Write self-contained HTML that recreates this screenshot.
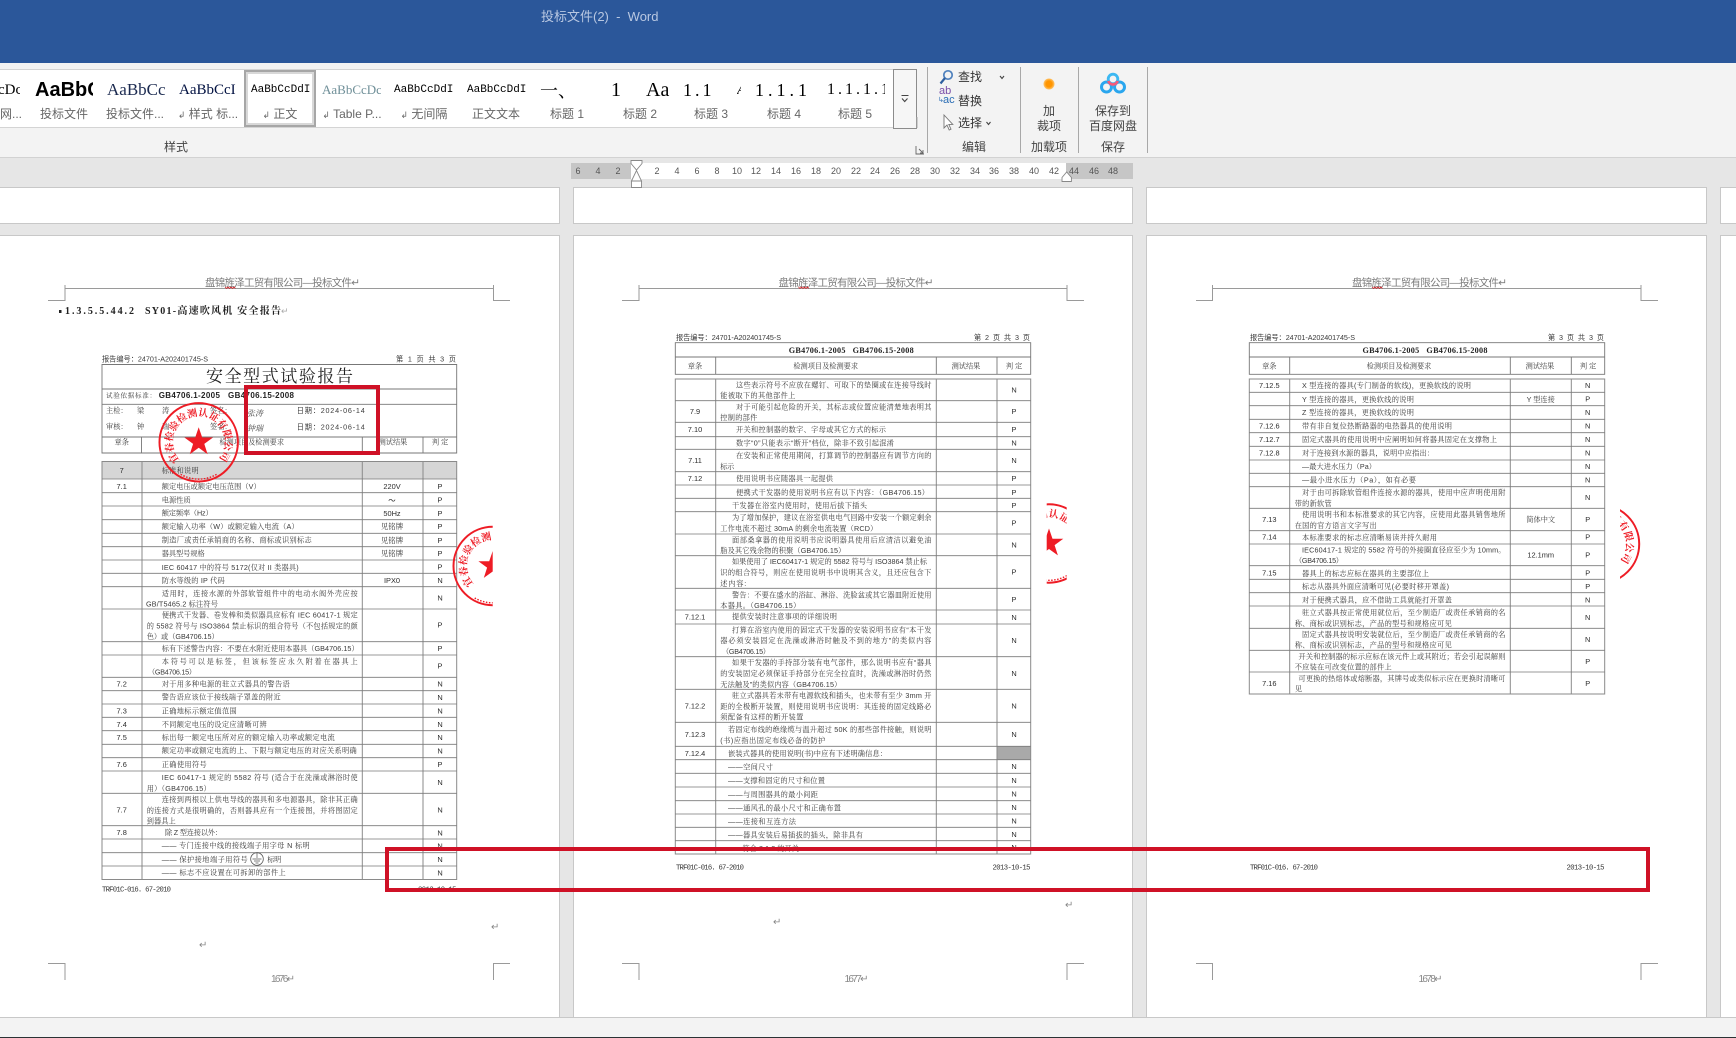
<!DOCTYPE html>
<html><head><meta charset="utf-8"><title>投标文件(2) - Word</title>
<style>
html,body{margin:0;padding:0;width:1736px;height:1038px;overflow:hidden;background:#e6e6e6}
body{position:relative;font-family:"Liberation Sans","Noto Sans CJK SC",sans-serif}
.a{position:absolute;white-space:nowrap}
.g{position:absolute;overflow:hidden;white-space:nowrap;top:78px;height:24px;line-height:24px;color:#000}
.l{position:absolute;top:105px;height:18px;line-height:18px;font-size:12px;color:#666;white-space:nowrap;transform:translateX(-50%)}
.c{position:absolute;font-size:12px;line-height:16px;color:#444;white-space:nowrap;transform:translate(-50%,-50%)}
.r{position:absolute;top:165px;font-size:9px;line-height:13px;color:#555;transform:translateX(-50%);transform-origin:center}
.p{position:absolute;background:#fff;box-shadow:0 0 0 1px #c8c8c8}
svg{position:absolute;left:0;top:0}
#doc{filter:blur(.3px)}
.t{font:7.2px "Liberation Sans","Noto Serif CJK SC",serif;fill:#3a3a3a}
.m{text-anchor:middle}
.n{font:7.4px "Liberation Sans",sans-serif;fill:#2c2c2c;text-anchor:middle}
.h{font:7.2px "Liberation Sans","Noto Sans CJK SC",sans-serif;fill:#3a3a3a}
.hd{font:10.5px "Liberation Sans","Noto Sans CJK SC",sans-serif;fill:#7c7c7c}
.s{font:bold 10px "Noto Serif CJK SC",serif;fill:#ee1c25}
</style></head><body>
<div class="a" style="left:0;top:0;width:1736px;height:63px;background:#2b579a"></div>
<div class="a" style="left:541px;top:8px;font-size:13px;line-height:18px;color:#b9c8e2">投标文件(2)&nbsp; - &nbsp;Word</div>
<div class="a" style="left:0;top:63px;width:1736px;height:94px;background:#f3f3f3;border-bottom:1px solid #d2d2d2"></div>

<div class="a" style="left:0;top:69px;width:893px;height:59px;background:#fff;border-top:1px solid #d4d4d4;border-bottom:1px solid #d4d4d4;box-sizing:border-box"></div>
<div class="a" style="left:244px;top:70px;width:72px;height:57px;background:#fff;border:2px solid #a6a6a6;box-shadow:inset 0 0 0 2px #d8d8d8;box-sizing:border-box"></div>
<div class="a" style="left:893px;top:69px;width:24px;height:60px;border:1px solid #8c8c8c;box-sizing:border-box;background:#f6f6f6"></div>
<svg width="1736" height="160" style="pointer-events:none">
<path d="M901.500 95.500h7M902 98.500l2.700 3 2.800-3" fill="none" stroke="#444" stroke-width="1.100"/>
<path d="M917 128v-11M927.500 67v86M1020.500 67v86M1078.500 67v86M1147.500 67v86" stroke="#a8a8a8" stroke-width="1"/>
<path d="M916 146v8h8M919 149l4 4m0-3v3h-3" fill="none" stroke="#666" stroke-width=".9"/>
<circle cx="948" cy="75" r="4.200" fill="none" stroke="#4f81bd" stroke-width="1.700"/><path d="M945 78l-4.500 5.500" stroke="#2f5f9f" stroke-width="2.200"/>
<path d="M1000 76l2 2.500 2-2.500M986.500 122l2 2.500 2-2.500" fill="none" stroke="#444" stroke-width="1.100"/>
<path d="M944 115v13l3-3 2.200 5 1.800-.8-2.200-4.800h4z" fill="#fff" stroke="#777" stroke-width=".9"/>
<defs><radialGradient id="o"><stop offset="55%" stop-color="#ff9500"/><stop offset="100%" stop-color="#ffc46a"/></radialGradient></defs>
<circle cx="1049" cy="84" r="5.500" fill="url(#o)"/>
<circle cx="1106.500" cy="87" r="5" fill="none" stroke="#2aa6ee" stroke-width="3"/>
<circle cx="1119.500" cy="87" r="5" fill="none" stroke="#2aa6ee" stroke-width="3"/>
<circle cx="1113" cy="79" r="4.800" fill="none" stroke="#3cb8f2" stroke-width="2.800"/>
<path d="M1108.400 81a4.800 4.800 0 0 0 9.200 0" fill="none" stroke="#f4597a" stroke-width="2.800"/>
</svg>
<div class="a" style="left:939px;top:87px;font:11px/9px 'Liberation Sans',sans-serif;color:#7a4ea8">ab</div>
<div class="a" style="left:943px;top:96px;font:11px/9px 'Liberation Sans',sans-serif;color:#2a6db5">ac</div>
<div class="a" style="left:938px;top:97px;font:7px/8px 'Liberation Sans',sans-serif;color:#2a6db5">↳</div>
<div class="a" style="left:958px;top:69px;font-size:12px;line-height:16px;color:#333">查找</div>
<div class="a" style="left:958px;top:93px;font-size:12px;line-height:16px;color:#333">替换</div>
<div class="a" style="left:958px;top:115px;font-size:12px;line-height:16px;color:#333">选择</div>
<div class="c" style="left:974px;top:147px">编辑</div>
<div class="c" style="left:1049px;top:111px">加</div>
<div class="c" style="left:1049px;top:126px">裁项</div>
<div class="c" style="left:1049px;top:147px">加载项</div>
<div class="c" style="left:1113px;top:111px">保存到</div>
<div class="c" style="left:1113px;top:126px">百度网盘</div>
<div class="c" style="left:1113px;top:147px">保存</div>
<div class="c" style="left:176px;top:147px">样式</div>

<div class="g" style="left:0;width:20px;font:15px/24px 'Liberation Serif',serif"><span style="margin-left:-2px">cDc</span></div>
<div class="g" style="left:35px;width:58px;font:bold 20px/24px 'Liberation Sans',sans-serif">AaBbC</div>
<div class="g" style="left:107px;width:59px;font:17px/24px 'Liberation Serif',serif;color:#1b2a50">AaBbCc</div>
<div class="g" style="left:179px;width:59px;font:15px/24px 'Liberation Serif',serif;color:#001040">AaBbCcI</div>
<div class="g" style="left:251px;width:59px;font:11px/24px 'Liberation Mono',monospace">AaBbCcDdI</div>
<div class="g" style="left:322px;width:59px;font:13px/24px 'Liberation Serif',serif;color:#6f8f98">AaBbCcDc</div>
<div class="g" style="left:394px;width:59px;font:11px/24px 'Liberation Mono',monospace">AaBbCcDdI</div>
<div class="g" style="left:467px;width:59px;font:11px/24px 'Liberation Mono',monospace">AaBbCcDdI</div>
<div class="g" style="left:540px;width:40px;font:18px/24px 'Noto Serif CJK SC',serif">一、</div>
<div class="g" style="left:611px;width:12px;font:20px/24px 'Liberation Serif',serif">1</div>
<div class="g" style="left:646px;width:26px;font:20px/24px 'Liberation Serif',serif">Aa</div>
<div class="g" style="left:683px;width:34px;font:18px/24px 'Liberation Serif',serif;letter-spacing:3px">1.1</div>
<div class="g" style="left:737px;width:4px;font:italic 15px/24px 'Liberation Serif',serif">A</div>
<div class="g" style="left:755px;width:56px;font:18px/24px 'Liberation Serif',serif;letter-spacing:4px">1.1.1</div>
<div class="g" style="left:827px;width:58px;font:16px/24px 'Liberation Serif',serif;letter-spacing:3px">1.1.1.1</div>
<div class="l" style="left:11px">网...</div>
<div class="l" style="left:64px">投标文件</div>
<div class="l" style="left:135px">投标文件...</div>
<div class="l" style="left:208px"><span style="font-size:9px">↲</span> 样式 标...</div>
<div class="l" style="left:280px"><span style="font-size:9px">↲</span> 正文</div>
<div class="l" style="left:352px"><span style="font-size:9px">↲</span> Table P...</div>
<div class="l" style="left:424px"><span style="font-size:9px">↲</span> 无间隔</div>
<div class="l" style="left:496px">正文文本</div>
<div class="l" style="left:567px">标题 1</div>
<div class="l" style="left:640px">标题 2</div>
<div class="l" style="left:711px">标题 3</div>
<div class="l" style="left:784px">标题 4</div>
<div class="l" style="left:855px">标题 5</div>

<!-- ruler -->
<div class="a" style="left:571px;top:163px;width:562px;height:16px;background:#c6c6c6"></div>
<div class="a" style="left:631px;top:163px;width:435px;height:16px;background:#fff"></div>
<div class="r" style="left:578px">6</div><div class="r" style="left:598px">4</div><div class="r" style="left:618px">2</div>
<div class="r" style="left:657px">2</div><div class="r" style="left:677px">4</div><div class="r" style="left:697px">6</div><div class="r" style="left:717px">8</div><div class="r" style="left:737px">10</div><div class="r" style="left:756px">12</div><div class="r" style="left:776px">14</div><div class="r" style="left:796px">16</div><div class="r" style="left:816px">18</div><div class="r" style="left:836px">20</div><div class="r" style="left:856px">22</div><div class="r" style="left:875px">24</div><div class="r" style="left:895px">26</div><div class="r" style="left:915px">28</div><div class="r" style="left:935px">30</div><div class="r" style="left:955px">32</div><div class="r" style="left:975px">34</div><div class="r" style="left:994px">36</div><div class="r" style="left:1014px">38</div><div class="r" style="left:1034px">40</div><div class="r" style="left:1054px">42</div><div class="r" style="left:1074px">44</div><div class="r" style="left:1094px">46</div><div class="r" style="left:1113px">48</div>

<!-- pages -->
<div class="p" style="left:-2px;top:188px;width:561px;height:35px"></div>
<div class="p" style="left:574px;top:188px;width:558px;height:35px"></div>
<div class="p" style="left:1147px;top:188px;width:559px;height:35px"></div>
<div class="p" style="left:1721px;top:188px;width:20px;height:35px"></div>
<div class="p" style="left:-2px;top:236px;width:561px;height:790px"></div>
<div class="p" style="left:574px;top:236px;width:558px;height:790px"></div>
<div class="p" style="left:1147px;top:236px;width:559px;height:790px"></div>
<div class="p" style="left:1721px;top:236px;width:20px;height:790px"></div>
<div class="a" style="left:0;top:1017px;width:1736px;height:20px;background:#f3f3f3;border-top:1px solid #c8c8c8;box-sizing:border-box"></div>
<div class="a" style="left:0;top:1037px;width:1736px;height:1px;background:#2a3234"></div>

<svg width="1736" height="1038">
<!-- ruler markers -->
<path d="M631 160.500h11v3l-5.500 6.500-5.500-6.500zM631.500 181l5-10.500 5 10.500zM631.500 181h10v6.500h-10z" fill="#fff" stroke="#888" stroke-width=".9"/>
<path d="M1062 181.500v-4l4.700-5.500 4.700 5.500v4z" fill="#fff" stroke="#888" stroke-width=".9"/>
<!-- crop marks -->
<g fill="none" stroke="#9a9a9a" stroke-width="1">
<path d="M48 300.500h17V285M493.500 285v15.500H510M65 288.500h428M48 963.500h17V980M493.500 980V963.500H510"/>
<path d="M622 300.500h17V285M1067 285v15.500H1084M639 288.500h428M622 963.500h17V980M1067 980V963.500H1084"/>
<path d="M1196 300.500h16.500V285M1641 285v15.500H1658M1212 288.500h429M1196 963.500h16.500V980M1641 980V963.500H1658"/>
</g>
<defs>
<path id="arc" d="M-19 18A26.200 26.200 0 1 1 19 18"/>
<clipPath id="c2"><rect x="400" y="500" width="92.700" height="120"/></clipPath>
<clipPath id="c3"><rect x="1046.700" y="495" width="20" height="100"/></clipPath>
<clipPath id="c4"><rect x="1620" y="495" width="30" height="100"/></clipPath>
<g id="stamp">
<circle r="39.200" fill="none" stroke="#ee1c25" stroke-width="2"/>
<path d="M0-15L3.500-4.800H14.300L5.600 1.600 8.900 11.900 0 5.500-8.900 11.900-5.600 1.600-14.300-4.800H-3.500z" fill="#ee1c25"/>
<text class="s"><textPath href="#arc">宜春检验检测认证有限公司</textPath></text>
<path d="M-18 32A36 36 0 0 0 18 32" fill="none" stroke="#ee1c25" stroke-width="1.400" stroke-dasharray="1.500 1.500"/>
</g>
</defs>
<g class="hd">
<text x="205" y="286" textLength="155">盘锦旌泽工贸有限公司—投标文件↵</text>
<text x="778.500" y="286" textLength="155">盘锦旌泽工贸有限公司—投标文件↵</text>
<text x="1352" y="286" textLength="155">盘锦旌泽工贸有限公司—投标文件↵</text>
</g>
<path d="M225 287l1.500 1.500 1.500-1.500 1.500 1.500 1.500-1.500 1.500 1.500 1.500-1.500 1.500 1.500M798.500 287l1.500 1.500 1.500-1.500 1.500 1.500 1.500-1.500 1.500 1.500 1.500-1.500 1.500 1.500M1372 287l1.500 1.500 1.500-1.500 1.500 1.500 1.500-1.500 1.500 1.500 1.500-1.500 1.500 1.500" fill="none" stroke="#d3272c" stroke-width=".8"/>
<rect x="59" y="310" width="2.500" height="3" fill="#222"/>
<text x="65" y="314" textLength="69" style="font:bold 10px 'Liberation Serif',serif;fill:#222">1.3.5.5.44.2</text>
<text x="145" y="314" textLength="136" style="font:bold 10px 'Liberation Serif','Noto Serif CJK SC',serif;fill:#222">SY01-高速吹风机 安全报告</text>
<text x="281" y="314" style="font:9px 'Liberation Sans',sans-serif;fill:#aaa">↵</text>
<g style="font:10px 'Liberation Sans',sans-serif;fill:#888">
<text x="491" y="930">↵</text><text x="199" y="948">↵</text><text x="1065" y="908">↵</text><text x="773" y="925">↵</text>
<text x="271" y="982" textLength="24">1676↵</text><text x="844.500" y="982" textLength="24">1677↵</text><text x="1418.500" y="982" textLength="24">1678↵</text>
</g>

<g id="doc">
<!-- PAGE 1 -->
<rect x="102" y="461" width="354.700" height="18" fill="#d6d6d6"/>
<path d="M102 364.500H456.700V453H102ZM102 389H456.700M102 404.300H456.700M102 437H456.700M141.500 437V453M362.300 437V453M423 437V453" fill="none" stroke="#777" stroke-width=".9"/>
<path d="M102 461.500H456.700V879.500H102ZM142 461.500V879.500M362.300 461.500V879.500M423 461.500V879.500" fill="none" stroke="#8a8a8a" stroke-width="1"/>
<path d="M102 479H456.700M102 492.700H456.700M102 506H456.700M102 519.700H456.700M102 533.300H456.700M102 546.700H456.700M102 560H456.700M102 573.300H456.700M102 586.700H456.700M102 609H456.700M102 641.700H456.700M102 655H456.700M102 677.300H456.700M102 690.700H456.700M102 704H456.700M102 717.300H456.700M102 730.700H456.700M102 744.300H456.700M102 757.700H456.700M102 771H456.700M102 793.300H456.700M102 825.700H456.700M102 839H456.700M102 852.700H456.700M102 866H456.700" fill="none" stroke="#7a7a7a" stroke-width=".8"/>
<text class="h" x="102" y="361.500" textLength="106">报告编号：24701-A202401745-S</text>
<text class="h" x="396" y="361.500" textLength="60">第 1 页 共 3 页</text>
<text x="206" y="382" textLength="147" style="font:17px 'Noto Serif CJK SC',serif;fill:#222">安全型式试验报告</text>
<text class="t" x="106" y="397.500" textLength="50" style="font-size:6.500px">试验依据标准：</text>
<text x="158.700" y="398" textLength="135.300" style="font:bold 8px 'Liberation Sans',sans-serif;fill:#222">GB4706.1-2005&#160;&#160;&#160;GB4706.15-2008</text>
<text class="t" x="106" y="413">主检：</text><text class="t" x="137" y="413">梁</text><text class="t" x="162" y="413">涛</text><text class="t" x="210" y="413">签名：</text>
<text x="247" y="416" style="font:italic 8px 'Noto Serif CJK SC',serif;fill:#444">张涛</text>
<text class="h" x="296.700" y="413" textLength="68">日期：2024-06-14</text>
<text class="t" x="106" y="429">审核：</text><text class="t" x="137" y="429">钟</text><text class="t" x="162" y="429">瑞</text><text class="t" x="210" y="429">签名：</text>
<text x="247" y="431" style="font:italic 8px 'Noto Serif CJK SC',serif;fill:#444">钟瑞</text>
<text class="h" x="296.700" y="429.500" textLength="68">日期：2024-06-14</text>
<text class="t m" x="121.700" y="444.500">章条</text><text class="t m" x="251.700" y="444.500">检测项目及检测要求</text><text class="t m" x="393" y="444.500">测试结果</text><text class="t m" x="440" y="444.500">判 定</text>
<g class="t">
<text x="161.700" y="473" textLength="37">标准和说明</text>
<text x="161.700" y="489.200" textLength="99">额定电压或额定电压范围（V）</text>
<text x="161.700" y="502.500" textLength="29">电源性质</text>
<text x="161.700" y="515.500" textLength="51">额定频率（Hz）</text>
<text x="161.700" y="529.200" textLength="137">额定输入功率（W）或额定输入电流（A）</text>
<text x="161.700" y="542.500" textLength="150">制造厂或责任承销商的名称、商标或识别标志</text>
<text x="161.700" y="556.200" textLength="43">器具型号规格</text>
<text x="161.700" y="570" textLength="137">IEC 60417 中的符号 5172(仅对 II 类器具)</text>
<text x="161.700" y="583.200" textLength="63">防水等级的 IP 代码</text>
<text x="161.700" y="595.800" textLength="196">适用时，连接水源的外部软管组件中的电动水阀外壳应按</text>
<text x="146" y="606.500" textLength="72">GB/T5465.2 标注符号</text>
<text x="161.700" y="617.500" textLength="196">便携式干发器、卷发棒和类似器具应标有 IEC 60417-1 规定</text>
<text x="146.700" y="628.500" textLength="211">的 5582 符号与 ISO3864 禁止标识的组合符号（不包括规定的颜</text>
<text x="146.700" y="639.200" textLength="72">色）或（GB4706.15）</text>
<text x="161.700" y="651.200" textLength="197">标有下述警告内容：不要在水附近使用本器具（GB4706.15）</text>
<text x="161.700" y="663.800" textLength="196">本符号可以是标签，但该标签应永久附着在器具上</text>
<text x="148" y="674.500" textLength="48">（GB4706.15）</text>
<text x="161.700" y="686.500" textLength="128">对于用多种电源的驻立式器具的警告语</text>
<text x="161.700" y="699.500" textLength="119">警告语应该位于接线端子罩盖的附近</text>
<text x="161.700" y="713.500" textLength="75">正确地标示额定值范围</text>
<text x="161.700" y="726.800" textLength="105">不同额定电压的设定应清晰可辨</text>
<text x="161.700" y="739.800" textLength="173">标出每一额定电压所对应的额定输入功率或额定电流</text>
<text x="161.700" y="753.200" textLength="195">额定功率或额定电流的上、下限与额定电压的对应关系明确</text>
<text x="161.700" y="767.200" textLength="45">正确使用符号</text>
<text x="161.700" y="780.200" textLength="196">IEC 60417-1 规定的 5582 符号 (适合于在洗澡或淋浴时使</text>
<text x="146.700" y="790.800" textLength="64">用）（GB4706.15）</text>
<text x="161.700" y="801.800" textLength="196">连接到两根以上供电导线的器具和多电源器具，除非其正确</text>
<text x="146.700" y="812.800" textLength="211">的连接方式是很明确的，否则器具应有一个连接图，并将图固定</text>
<text x="146.700" y="823.500" textLength="29">到器具上</text>
<text x="165" y="835.200" textLength="57">除 Z 型连接以外：</text>
<text x="161.700" y="848.200" textLength="148">—— 专门连接中线的接线端子用字母 N 标明</text>
<text x="161.700" y="861.800" textLength="86">—— 保护接地端子用符号</text>
<text x="267.300" y="861.800" textLength="14">标明</text>
<text x="161.700" y="875.200" textLength="124">—— 标志不应设置在可拆卸的部件上</text>
</g>
<circle cx="257" cy="859" r="6.300" fill="none" stroke="#555" stroke-width=".8"/><path d="M257 853v5M252.500 859h9M254 861h6M255.500 863h3" stroke="#555" stroke-width=".7"/>
<g class="n">
<text x="121.700" y="473">7</text><text x="121.700" y="489">7.1</text><text x="121.700" y="686.500">7.2</text><text x="121.700" y="713.500">7.3</text><text x="121.700" y="726.800">7.4</text><text x="121.700" y="739.800">7.5</text><text x="121.700" y="767">7.6</text><text x="121.700" y="812.500">7.7</text><text x="121.700" y="835">7.8</text>
<text x="392" y="489">220V</text><text x="392" y="503">～</text><text x="392" y="516">50Hz</text><text x="392" y="583">IPX0</text>
<text x="440" y="489">P</text><text x="440" y="502.500">P</text><text x="440" y="516">P</text><text x="440" y="529">P</text><text x="440" y="543">P</text><text x="440" y="556">P</text><text x="440" y="569.500">P</text><text x="440" y="583">N</text><text x="440" y="600.500">N</text><text x="440" y="627.500">P</text><text x="440" y="651">P</text><text x="440" y="668.500">P</text><text x="440" y="686.500">N</text><text x="440" y="700">N</text><text x="440" y="713.500">N</text><text x="440" y="727">N</text><text x="440" y="740">N</text><text x="440" y="753.500">N</text><text x="440" y="767">P</text><text x="440" y="785">N</text><text x="440" y="812.500">N</text><text x="440" y="835.500">N</text><text x="440" y="848.500">N</text><text x="440" y="862">N</text><text x="440" y="875.500">N</text>
<text x="392" y="529" style="font-family:'Noto Serif CJK SC',serif">见铭牌</text><text x="392" y="543" style="font-family:'Noto Serif CJK SC',serif">见铭牌</text><text x="392" y="556" style="font-family:'Noto Serif CJK SC',serif">见铭牌</text>
</g>
<text x="102" y="891.500" textLength="69" style="font:7.200px 'Liberation Mono',monospace;fill:#333">TRF01C-016. 67-2010</text>
<text x="418" y="891.500" textLength="38.500" style="font:7.200px 'Liberation Mono',monospace;fill:#333">2013-10-15</text>

<!-- PAGE 2 -->
<path d="M675.300 342.700H1030.700V374.300H675.300ZM675.300 357H1030.700M715.700 357V374.300M936.300 357V374.300M997 357V374.300" fill="none" stroke="#777" stroke-width=".9"/>
<rect x="997" y="746.300" width="33.700" height="13.400" fill="#a9a9a9"/>
<path d="M675.300 379H1030.700V854H675.300ZM715.700 379V854M936.300 379V854M997 379V854" fill="none" stroke="#8a8a8a" stroke-width="1"/>
<path d="M675.300 400.700H1030.700M675.300 422.300H1030.700M675.300 436.700H1030.700M675.300 449.300H1030.700M675.300 471.700H1030.700M675.300 485H1030.700M675.300 498.300H1030.700M675.300 511.700H1030.700M675.300 534H1030.700M675.300 555.700H1030.700M675.300 588.300H1030.700M675.300 610H1030.700M675.300 624H1030.700M675.300 656.700H1030.700M675.300 689.300H1030.700M675.300 722.300H1030.700M675.300 746.300H1030.700M675.300 759.700H1030.700M675.300 773.300H1030.700M675.300 787H1030.700M675.300 800.700H1030.700M675.300 814H1030.700M675.300 827.300H1030.700M675.300 840.700H1030.700" fill="none" stroke="#7a7a7a" stroke-width=".8"/>
<text class="h" x="676" y="340" textLength="105">报告编号：24701-A202401745-S</text>
<text class="h" x="974" y="340" textLength="56">第 2 页 共 3 页</text>
<text x="788.700" y="353" textLength="125" style="font:bold 8.200px 'Liberation Serif',serif;fill:#222">GB4706.1-2005&#160;&#160;&#160;GB4706.15-2008</text>
<text class="t m" x="695" y="368.500">章条</text><text class="t m" x="825.700" y="368.500">检测项目及检测要求</text><text class="t m" x="966" y="368.500">测试结果</text><text class="t m" x="1014" y="368.500">判 定</text>
<g class="t">
<text x="736" y="387.500" textLength="195.500">这些表示符号不应放在螺钉、可取下的垫圈或在连接导线时</text>
<text x="720.300" y="398.200" textLength="75">能被取下的其他部件上</text>
<text x="736" y="409.500" textLength="195.500">对于可能引起危险的开关，其标志或位置应能清楚地表明其</text>
<text x="720.300" y="420.200" textLength="37">控制的部件</text>
<text x="736" y="432.200" textLength="150">开关和控制器的数字、字母或其它方式的标示</text>
<text x="736" y="445.500" textLength="158">数字“0”只能表示“断开”档位，除非不致引起混淆</text>
<text x="736" y="458.200" textLength="195.500">在安装和正常使用期间，打算调节的控制器应有调节方向的</text>
<text x="720.300" y="468.800" textLength="14">标示</text>
<text x="736" y="480.800" textLength="97">使用说明书应随器具一起提供</text>
<text x="736" y="494.800" textLength="193">便携式干发器的使用说明书应有以下内容：（GB4706.15）</text>
<text x="732" y="508.200" textLength="135">干发器在浴室内使用时，使用后拔下插头</text>
<text x="732" y="520.200" textLength="199.500">为了增加保护，建议在浴室供电电气回路中安装一个额定剩余</text>
<text x="720.300" y="531.200" textLength="157">工作电流不超过 30mA 的剩余电流装置（RCD）</text>
<text x="732" y="542.500" textLength="199.500">面部桑拿器的使用说明书应说明器具使用后应清洁以避免油</text>
<text x="720.300" y="553.200" textLength="125">脂及其它残余物的积聚（GB4706.15）</text>
<text x="732" y="564.200" textLength="195">如果使用了 IEC60417-1 规定的 5582 符号与 ISO3864 禁止标</text>
<text x="720.300" y="575.200" textLength="211">识的组合符号，则应在使用说明书中说明其含义，且还应包含下</text>
<text x="720.300" y="585.800" textLength="26">述内容:</text>
<text x="732" y="597.500" textLength="199.500">警告：不要在盛水的浴缸、淋浴、洗脸盆或其它器皿附近使用</text>
<text x="720.300" y="608.200" textLength="80">本器具。（GB4706.15）</text>
<text x="732" y="619.200" textLength="105">提供安装时注意事项的详细说明</text>
<text x="732" y="632.500" textLength="199.500">打算在浴室内使用的固定式干发器的安装说明书应有“本干发</text>
<text x="720.300" y="643.200" textLength="211">器必须安装固定在洗澡或淋浴时触及不到的地方”的类似内容</text>
<text x="722" y="654.200" textLength="48">（GB4706.15）</text>
<text x="732" y="665.200" textLength="199.500">如果干发器的手持部分装有电气部件，那么说明书应有“器具</text>
<text x="720.300" y="675.800" textLength="211">的安装固定必须保证手持部分在完全拉直时，洗澡或淋浴时仍然</text>
<text x="720.300" y="686.800" textLength="121">无法触及”的类似内容（GB4706.15）</text>
<text x="732" y="697.800" textLength="199.500">驻立式器具若未带有电源软线和插头，也未带有至少 3mm 开</text>
<text x="720.300" y="708.800" textLength="211">距的全极断开装置，则使用说明书应说明：其连接的固定线路必</text>
<text x="720.300" y="719.500" textLength="83">须配备有这样的断开装置</text>
<text x="728" y="732.200" textLength="203.500">若固定布线的绝缘缆与温升超过 50K 的那些部件接触，则说明</text>
<text x="720.300" y="742.800" textLength="105">(书)应指出固定布线必备的防护</text>
<text x="728" y="756.200" textLength="159">嵌装式器具的使用说明(书)中应有下述明确信息：</text>
<text x="728" y="769.500" textLength="45">——空间尺寸</text>
<text x="728" y="783.200" textLength="97">——支撑和固定的尺寸和位置</text>
<text x="728" y="796.800" textLength="90">——与周围器具的最小间距</text>
<text x="728" y="810.500" textLength="113">——通风孔的最小尺寸和正确布置</text>
<text x="728" y="823.800" textLength="68">——连接和互连方法</text>
<text x="728" y="837.500" textLength="135">——器具安装后易插拔的插头，除非具有</text>
<text x="728" y="850.800" textLength="71">——符合 8.1.2 的开关</text>
</g>
<g class="n">
<text x="695" y="414">7.9</text><text x="695" y="432">7.10</text><text x="695" y="463">7.11</text><text x="695" y="481">7.12</text><text x="695" y="619.500">7.12.1</text><text x="695" y="708.500">7.12.2</text><text x="695" y="737">7.12.3</text><text x="695" y="756">7.12.4</text>
<text x="1014" y="392.500">N</text><text x="1014" y="414">P</text><text x="1014" y="432">P</text><text x="1014" y="445.500">N</text><text x="1014" y="463">N</text><text x="1014" y="481">P</text><text x="1014" y="495">P</text><text x="1014" y="508">P</text><text x="1014" y="525.500">P</text><text x="1014" y="547.500">N</text><text x="1014" y="574.500">P</text><text x="1014" y="602">P</text><text x="1014" y="620">N</text><text x="1014" y="643">N</text><text x="1014" y="676">N</text><text x="1014" y="708.500">N</text><text x="1014" y="737">N</text><text x="1014" y="769">N</text><text x="1014" y="783">N</text><text x="1014" y="796.500">N</text><text x="1014" y="810">N</text><text x="1014" y="823.500">N</text><text x="1014" y="837">N</text><text x="1014" y="850">N</text>
</g>
<text x="676" y="869.500" textLength="68" style="font:7.200px 'Liberation Mono',monospace;fill:#333">TRF01C-016. 67-2010</text>
<text x="992.500" y="869.500" textLength="38" style="font:7.200px 'Liberation Mono',monospace;fill:#333">2013-10-15</text>

<!-- PAGE 3 -->
<path d="M1249.300 342.700H1604.700V374.300H1249.300ZM1249.300 357H1604.700M1289.700 357V374.300M1510.300 357V374.300M1571.300 357V374.300" fill="none" stroke="#777" stroke-width=".9"/>
<path d="M1249.300 379H1604.700V694H1249.300ZM1289.700 379V694M1510.300 379V694M1571.300 379V694" fill="none" stroke="#8a8a8a" stroke-width="1"/>
<path d="M1249.300 392.300H1604.700M1249.300 405.700H1604.700M1249.300 419.300H1604.700M1249.300 432.700H1604.700M1249.300 446.300H1604.700M1249.300 460H1604.700M1249.300 473.300H1604.700M1249.300 486.700H1604.700M1249.300 508.300H1604.700M1249.300 530.700H1604.700M1249.300 544H1604.700M1249.300 565.700H1604.700M1249.300 579.300H1604.700M1249.300 592.700H1604.700M1249.300 606H1604.700M1249.300 628.300H1604.700M1249.300 650.300H1604.700M1249.300 672H1604.700" fill="none" stroke="#7a7a7a" stroke-width=".8"/>
<text class="h" x="1250" y="340" textLength="105">报告编号：24701-A202401745-S</text>
<text class="h" x="1548" y="340" textLength="56">第 3 页 共 3 页</text>
<text x="1362.500" y="353" textLength="125" style="font:bold 8.200px 'Liberation Serif',serif;fill:#222">GB4706.1-2005&#160;&#160;&#160;GB4706.15-2008</text>
<text class="t m" x="1269.300" y="368.500">章条</text><text class="t m" x="1399" y="368.500">检测项目及检测要求</text><text class="t m" x="1540" y="368.500">测试结果</text><text class="t m" x="1588" y="368.500">判 定</text>
<g class="t">
<text x="1302" y="388.200" textLength="169">X 型连接的器具(专门制备的软线)，更换软线的说明</text>
<text x="1302" y="401.800" textLength="112">Y 型连接的器具，更换软线的说明</text>
<text x="1302" y="415.200" textLength="112">Z 型连接的器具，更换软线的说明</text>
<text x="1302" y="428.500" textLength="150">带有非自复位热断路器的电热器具的使用说明</text>
<text x="1302" y="442.200" textLength="195">固定式器具的使用说明中应阐明如何将器具固定在支撑物上</text>
<text x="1302" y="455.500" textLength="132">对于连接到水源的器具，说明中应指出：</text>
<text x="1302" y="469.200" textLength="74">—最大进水压力（Pa）</text>
<text x="1302" y="482.500" textLength="114">—最小进水压力（Pa），如有必要</text>
<text x="1302" y="494.800" textLength="203.500">对于由可拆除软管组件连接水源的器具，使用中应声明使用附</text>
<text x="1294.700" y="505.800" textLength="37">带的新软管</text>
<text x="1302" y="517.200" textLength="203.500">使用说明书和本标准要求的其它内容，应使用此器具销售地所</text>
<text x="1294.700" y="527.800" textLength="82">在国的官方语言文字写出</text>
<text x="1302" y="539.800" textLength="135">本标准要求的标志应清晰易读并持久耐用</text>
<text x="1302" y="552.500" textLength="203.500">IEC60417-1 规定的 5582 符号的外接圈直径应至少为 10mm。</text>
<text x="1295" y="563.200" textLength="48">（GB4706.15）</text>
<text x="1302" y="575.800" textLength="127">器具上的标志应标在器具的主要部位上</text>
<text x="1302" y="589.200" textLength="147">标志从器具外面应清晰可见(必要时移开罩盖)</text>
<text x="1302" y="602.500" textLength="150">对于便携式器具，应不借助工具就能打开罩盖</text>
<text x="1302" y="614.800" textLength="203.500">驻立式器具按正常使用就位后，至少制造厂或责任承销商的名</text>
<text x="1294.700" y="625.800" textLength="157">称、商标或识别标志，产品的型号和规格应可见</text>
<text x="1302" y="636.800" textLength="203.500">固定式器具按说明安装就位后，至少制造厂或责任承销商的名</text>
<text x="1294.700" y="647.500" textLength="157">称、商标或识别标志，产品的型号和规格应可见</text>
<text x="1298.500" y="658.800" textLength="207">开关和控制器的标示应标在该元件上或其附近；若会引起误解则</text>
<text x="1294.700" y="669.500" textLength="97">不应装在可改变位置的部件上</text>
<text x="1298.500" y="680.800" textLength="207">可更换的热熔体或熔断器，其牌号或类似标示应在更换时清晰可</text>
<text x="1294.700" y="691.500" textLength="7">见</text>
</g>
<g class="t m"><text x="1540.700" y="401.800">Y 型连接</text><text x="1540.700" y="522.200">简体中文</text></g>
<g class="n">
<text x="1269.300" y="388">7.12.5</text><text x="1269.300" y="428.500">7.12.6</text><text x="1269.300" y="442">7.12.7</text><text x="1269.300" y="455.500">7.12.8</text><text x="1269.300" y="522">7.13</text><text x="1269.300" y="539.500">7.14</text><text x="1269.300" y="575.500">7.15</text><text x="1269.300" y="685.800">7.16</text>
<text x="1540.700" y="557.500">12.1mm</text>
<text x="1587.700" y="388">N</text><text x="1587.700" y="401.500">P</text><text x="1587.700" y="415">N</text><text x="1587.700" y="428.500">N</text><text x="1587.700" y="442">N</text><text x="1587.700" y="455.500">N</text><text x="1587.700" y="469">N</text><text x="1587.700" y="482.500">N</text><text x="1587.700" y="500">N</text><text x="1587.700" y="522">P</text><text x="1587.700" y="539.500">P</text><text x="1587.700" y="557.500">P</text><text x="1587.700" y="575.500">P</text><text x="1587.700" y="589">P</text><text x="1587.700" y="602.500">N</text><text x="1587.700" y="620">N</text><text x="1587.700" y="642">N</text><text x="1587.700" y="664">P</text><text x="1587.700" y="685.800">P</text>
</g>
<text x="1250" y="869.500" textLength="68" style="font:7.200px 'Liberation Mono',monospace;fill:#333">TRF01C-016. 67-2010</text>
<text x="1566.500" y="869.500" textLength="38" style="font:7.200px 'Liberation Mono',monospace;fill:#333">2013-10-15</text>

<!-- stamps -->
<use href="#stamp" transform="translate(198.700 442.300)"/>
<g clip-path="url(#c2)"><use href="#stamp" transform="translate(492.700 566)"/></g>
<g clip-path="url(#c3)"><use href="#stamp" transform="translate(1049 543.500)"/></g>
<g clip-path="url(#c4)"><use href="#stamp" transform="translate(1600 544)"/></g>
</g>

<!-- red annotation boxes -->
<rect x="246" y="387" width="132" height="66" fill="none" stroke="#cf1126" stroke-width="4"/>
<rect x="387" y="849" width="1261" height="41" fill="none" stroke="#cf1126" stroke-width="4"/>
</svg>
</body></html>
